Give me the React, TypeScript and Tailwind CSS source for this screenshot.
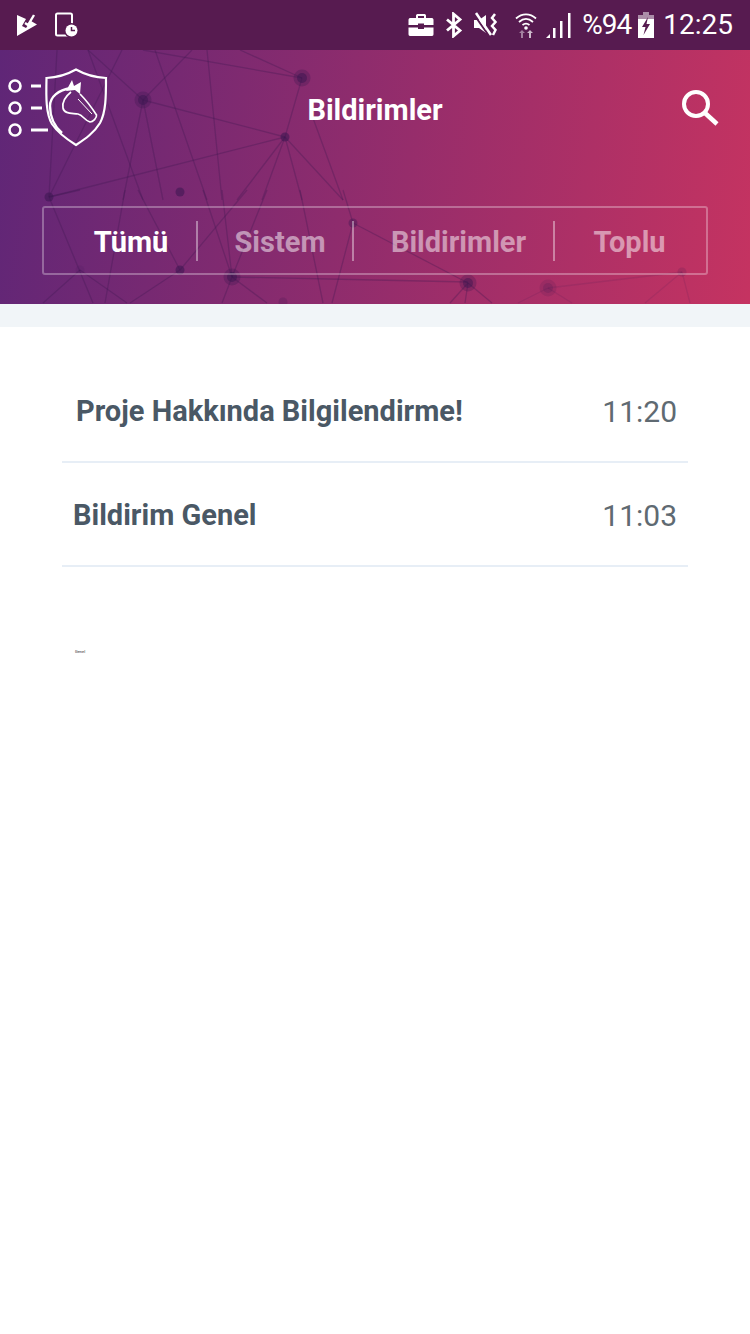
const bigNodes = [[143, 50, 1], [302, 28, 1], [232, 227, 1], [468, 233, 0.9], [548, 238, 0.45]]
const smallNodes = [[285, 87, 1], [49, 147, 1], [180, 142, 1], [180, 220, 1], [353, 173, 0.7], [682, 222, 0.3], [283, 252, 0.4], [80, 220, 0.2]]
const lines = [
    [57, 0, 49, 147], [88, 0, 143, 50], [192, 0, 143, 50], [122, 0, 49, 147], [88, 0, 143, 150], [155, 0, 207, 150], [207, 0, 222, 150],
    [143, 50, 123, 150], [143, 50, 163, 150], [143, 50, 285, 87], [49, 147, 285, 87], [285, 87, 302, 28], [302, 28, 143, 0], [302, 28, 240, 0],
    [285, 87, 237, 150], [285, 87, 262, 150], [285, 87, 302, 150], [285, 87, 343, 150], [310, 60, 343, 150],
    [49, 147, 93, 253], [49, 147, 80, 140], [125, 140, 105, 253], [138, 140, 180, 220], [80, 220, 43, 253], [80, 220, 127, 253],
    [180, 220, 130, 253], [180, 220, 247, 140], [203, 140, 232, 227], [222, 140, 232, 227], [267, 140, 232, 227],
    [232, 227, 222, 253], [232, 227, 267, 253], [232, 227, 375, 230], [300, 140, 323, 253], [343, 140, 353, 173], [353, 173, 332, 253],
    [353, 173, 468, 233], [375, 230, 468, 232], [468, 233, 450, 253], [468, 233, 465, 253], [468, 233, 492, 253],
]
const fadedLines = [[548, 238, 518, 253], [548, 238, 572, 253], [548, 238, 682, 222], [682, 222, 645, 253], [682, 222, 690, 253]]

const NetworkBackground = () => (
    <svg className="absolute inset-0" width="750" height="254" viewBox="0 0 750 254" fill="none">
        <g stroke="#3a1650" strokeOpacity="0.3" strokeWidth="1.3">
            {lines.map((l, i) => <line key={i} x1={l[0]} y1={l[1]} x2={l[2]} y2={l[3]}/>)}
        </g>
        <g stroke="#3a1650" strokeOpacity="0.12" strokeWidth="1.3">
            {fadedLines.map((l, i) => <line key={i} x1={l[0]} y1={l[1]} x2={l[2]} y2={l[3]}/>)}
        </g>
        {bigNodes.map((n, i) => (
            <g key={i} opacity={n[2]}>
                <circle cx={n[0]} cy={n[1]} r="8.5" fill="#3a1650" fillOpacity="0.3"/>
                <circle cx={n[0]} cy={n[1]} r="5" fill="#3a1650" fillOpacity="0.5"/>
            </g>
        ))}
        {smallNodes.map((n, i) => <circle key={i} cx={n[0]} cy={n[1]} r="4.5" fill="#3a1650" fillOpacity={0.55 * n[2]}/>)}
    </svg>
)

const Logo = () => (
    <svg width="108" height="80" viewBox="0 0 108 80" fill="none" stroke="white">
        <g strokeWidth="2.6">
            <circle cx="15" cy="18" r="5.5"/>
            <circle cx="15" cy="40" r="5.5"/>
            <circle cx="15" cy="62" r="5.5"/>
        </g>
        <g strokeWidth="2.8">
            <path d="M31 18H41M31 40H42M31 62H48"/>
        </g>
        <path strokeWidth="2.2" d="M76 1.5C68 6 58 9.500 46.500 10C46 30 46 46 52 56C58 65 68 72 76 77C85 71 94 65 100 55C106 44 106 28 106 10C94 9.500 84 6 76 1.500Z"/>
        <path strokeWidth="2.4" d="M71 20C58 22 50 29 50 38C50 49 54 58 62 65"/>
        <path strokeWidth="1.7" d="M71 24C66 28 62 34 63 40C64 46 72 45 78 46C83 47 85 53 90 54C93 54 97 50 96.500 47C92 40 86 32 80 26"/>
        <path strokeWidth="1" d="M78 31L92 46"/>
        <path fill="white" stroke="none" d="M66 23L72 12L74 18L81 14L80 26L75 22Z"/>
    </svg>
)

const StatusLeft = () => (
    <div className="flex items-center gap-[16px]">
        <svg width="22" height="24" viewBox="0 0 22 24" fill="white">
            <path d="M1 2L10 6L6 13L10 15L15 8L21 11.500L1 23Z"/>
            <path d="M9 10L12 12L18 2" fill="none" stroke="white" strokeWidth="2.400"/>
        </svg>
        <svg width="26" height="26" viewBox="0 0 26 26" fill="none">
            <rect x="2" y="1.500" width="16" height="22" rx="1.500" stroke="white" strokeWidth="2"/>
            <circle cx="17.500" cy="18.500" r="7.500" fill="#571b50"/>
            <circle cx="17.500" cy="18.500" r="6" fill="white"/>
            <path d="M17.500 15V18.500H21" stroke="#571b50" strokeWidth="1.500"/>
        </svg>
    </div>
)

const StatusRight = () => (
    <div className="flex items-center text-[28px] leading-none text-white">
        <svg width="26" height="24" viewBox="0 0 26 24" fill="white">
            <path d="M8 5V2.500C8 1.500 9 1 10 1H16C17 1 18 1.500 18 2.500V5H16V3H10V5Z"/>
            <path d="M2 5H24C25 5 25.500 6 25.500 7V12H16V10.500H10V12H.5V7C.5 6 1 5 2 5Z"/>
            <path d="M.5 14.500H10V16H16V14.500H25.500V21C25.500 22 25 23 24 23H2C1 23 .5 22 .5 21Z"/>
        </svg>
        <svg className="ml-[11px]" width="18" height="26" viewBox="0 0 18 26" fill="none" stroke="white" strokeWidth="2.800">
            <path d="M2 7.500L15 18.500L8.500 24V2L15 7.500L2 18.500"/>
        </svg>
        <svg className="ml-[10px]" width="27" height="26" viewBox="0 0 27 26" fill="none">
            <path fill="white" d="M1 8H6L13 3V21L6 16H1Z"/>
            <path stroke="#571b50" strokeWidth="2" d="M0 1L16 24"/>
            <path stroke="white" strokeWidth="2.500" d="M3 1L18 23"/>
            <path stroke="white" strokeWidth="2.500" d="M22 2L19 6L22.500 10L19 14L22.500 18L20 23"/>
        </svg>
        <svg className="ml-[15px]" width="22" height="26" viewBox="0 0 22 26" fill="none">
            <path stroke="white" strokeWidth="1.800" d="M1 6.500C7 1 15 1 21 6.500M4 10C8.500 6 13.500 6 18 10M7.500 13C9.500 11.500 12.500 11.500 14.500 13"/>
            <circle cx="11" cy="16" r="1.800" fill="white"/>
            <path fill="white" fillOpacity="0.45" d="M6 26V21H4L7 18L10 21H8V26Z"/>
            <path fill="white" fillOpacity="0.7" d="M14 26V21H12L15 18L18 21H16V26Z"/>
        </svg>
        <svg className="ml-[9px]" width="25" height="25" viewBox="0 0 25 25" fill="white">
            <path d="M0 25L4 21V25Z"/>
            <rect x="7" y="15" width="2.500" height="10"/>
            <rect x="14" y="8" width="2.500" height="17"/>
            <rect x="22" y="0" width="2.500" height="25"/>
        </svg>
        <span className="ml-[11px] tracking-[-1px]">%94</span>
        <svg className="ml-[7px]" width="16" height="26" viewBox="0 0 16 26">
            <rect x="5" y="0" width="6" height="3" fill="white" fillOpacity="0.5"/>
            <rect x="0" y="3" width="16" height="4" fill="white" fillOpacity="0.5"/>
            <rect x="0" y="7" width="16" height="19" fill="white"/>
            <path fill="#571b50" d="M10 5L4 15H7.500L5.500 23L12 12H8.500Z"/>
        </svg>
        <span className="ml-[9px]">12:25</span>
    </div>
)

const tabs = [
    {label: "Tümü", className: "w-[154px] pl-[22px] border-r-2 text-white"},
    {label: "Sistem", className: "w-[156px] pl-[10px] border-r-2 text-white/50"},
    {label: "Bildirimler", className: "w-[201px] pl-[10px] border-r-2 text-white/50"},
    {label: "Toplu", className: "flex-1 pr-[2px] text-white/50"},
]

const rows = [
    {title: "Proje Hakkında Bilgilendirme!", time: "11:20", className: "pl-[14px]", timeClassName: "-mt-[2px]"},
    {title: "Bildirim Genel", time: "11:03", className: "pl-[11px]", timeClassName: "-mt-[1px]"},
]

const App = () => {
    return (
        <div className="w-[750px] h-[1334px] bg-white font-['Roboto',sans-serif] overflow-hidden">
            <div className="h-[50px] bg-[#571b50] flex items-center justify-between pl-[16px] pr-[17px]">
                <StatusLeft/>
                <StatusRight/>
            </div>
            <header className="relative h-[254px] bg-[linear-gradient(98deg,#5f2677,#c53361)]">
                <NetworkBackground/>
                <div className="relative h-[156px] grid grid-cols-[1fr_auto_1fr] items-start">
                    <div className="mt-[18px]"><Logo/></div>
                    <h1 className="mt-[41px] text-[29px] leading-[38px] font-bold text-white">Bildirimler</h1>
                    <svg className="mt-[38px] mr-[30px] justify-self-end" width="40" height="40" viewBox="0 0 40 40" fill="none" stroke="white">
                        <circle cx="16" cy="16" r="12" strokeWidth="4"/>
                        <path d="M25 25L37 36" strokeWidth="4.500"/>
                    </svg>
                </div>
                <nav className="relative mx-[42px] h-[69px] border-2 border-white/30 rounded-[3px] flex items-center">
                    {tabs.map(tab => (
                        <div
                            key={tab.label}
                            className={`h-[40px] pt-[5px] flex items-center justify-center border-white/40 text-[29px] font-bold ${tab.className}`}
                        >
                            {tab.label}
                        </div>
                    ))}
                </nav>
            </header>
            <div className="h-[23px] bg-[#f1f5f8]"></div>
            <main className="mx-[62px]">
                {rows.map((row, i) => (
                    <div
                        key={row.title}
                        className={`flex items-center justify-between border-b-2 border-[#e7eef6] pr-[11px] ${i === 0 ? "h-[136px] pt-[36px]" : "h-[104px] pt-[3px]"} ${row.className}`}
                    >
                        <span className="text-[29px] font-bold text-[#4a5865]">{row.title}</span>
                        <span className={`text-[30px] text-[#5f6a72] ${row.timeClassName}`}>{row.time}</span>
                    </div>
                ))}
                <p className="mt-[81px] ml-[13px] text-[4px] leading-[8px] text-[#333]">Genel</p>
            </main>
        </div>
    )
}

export default App
